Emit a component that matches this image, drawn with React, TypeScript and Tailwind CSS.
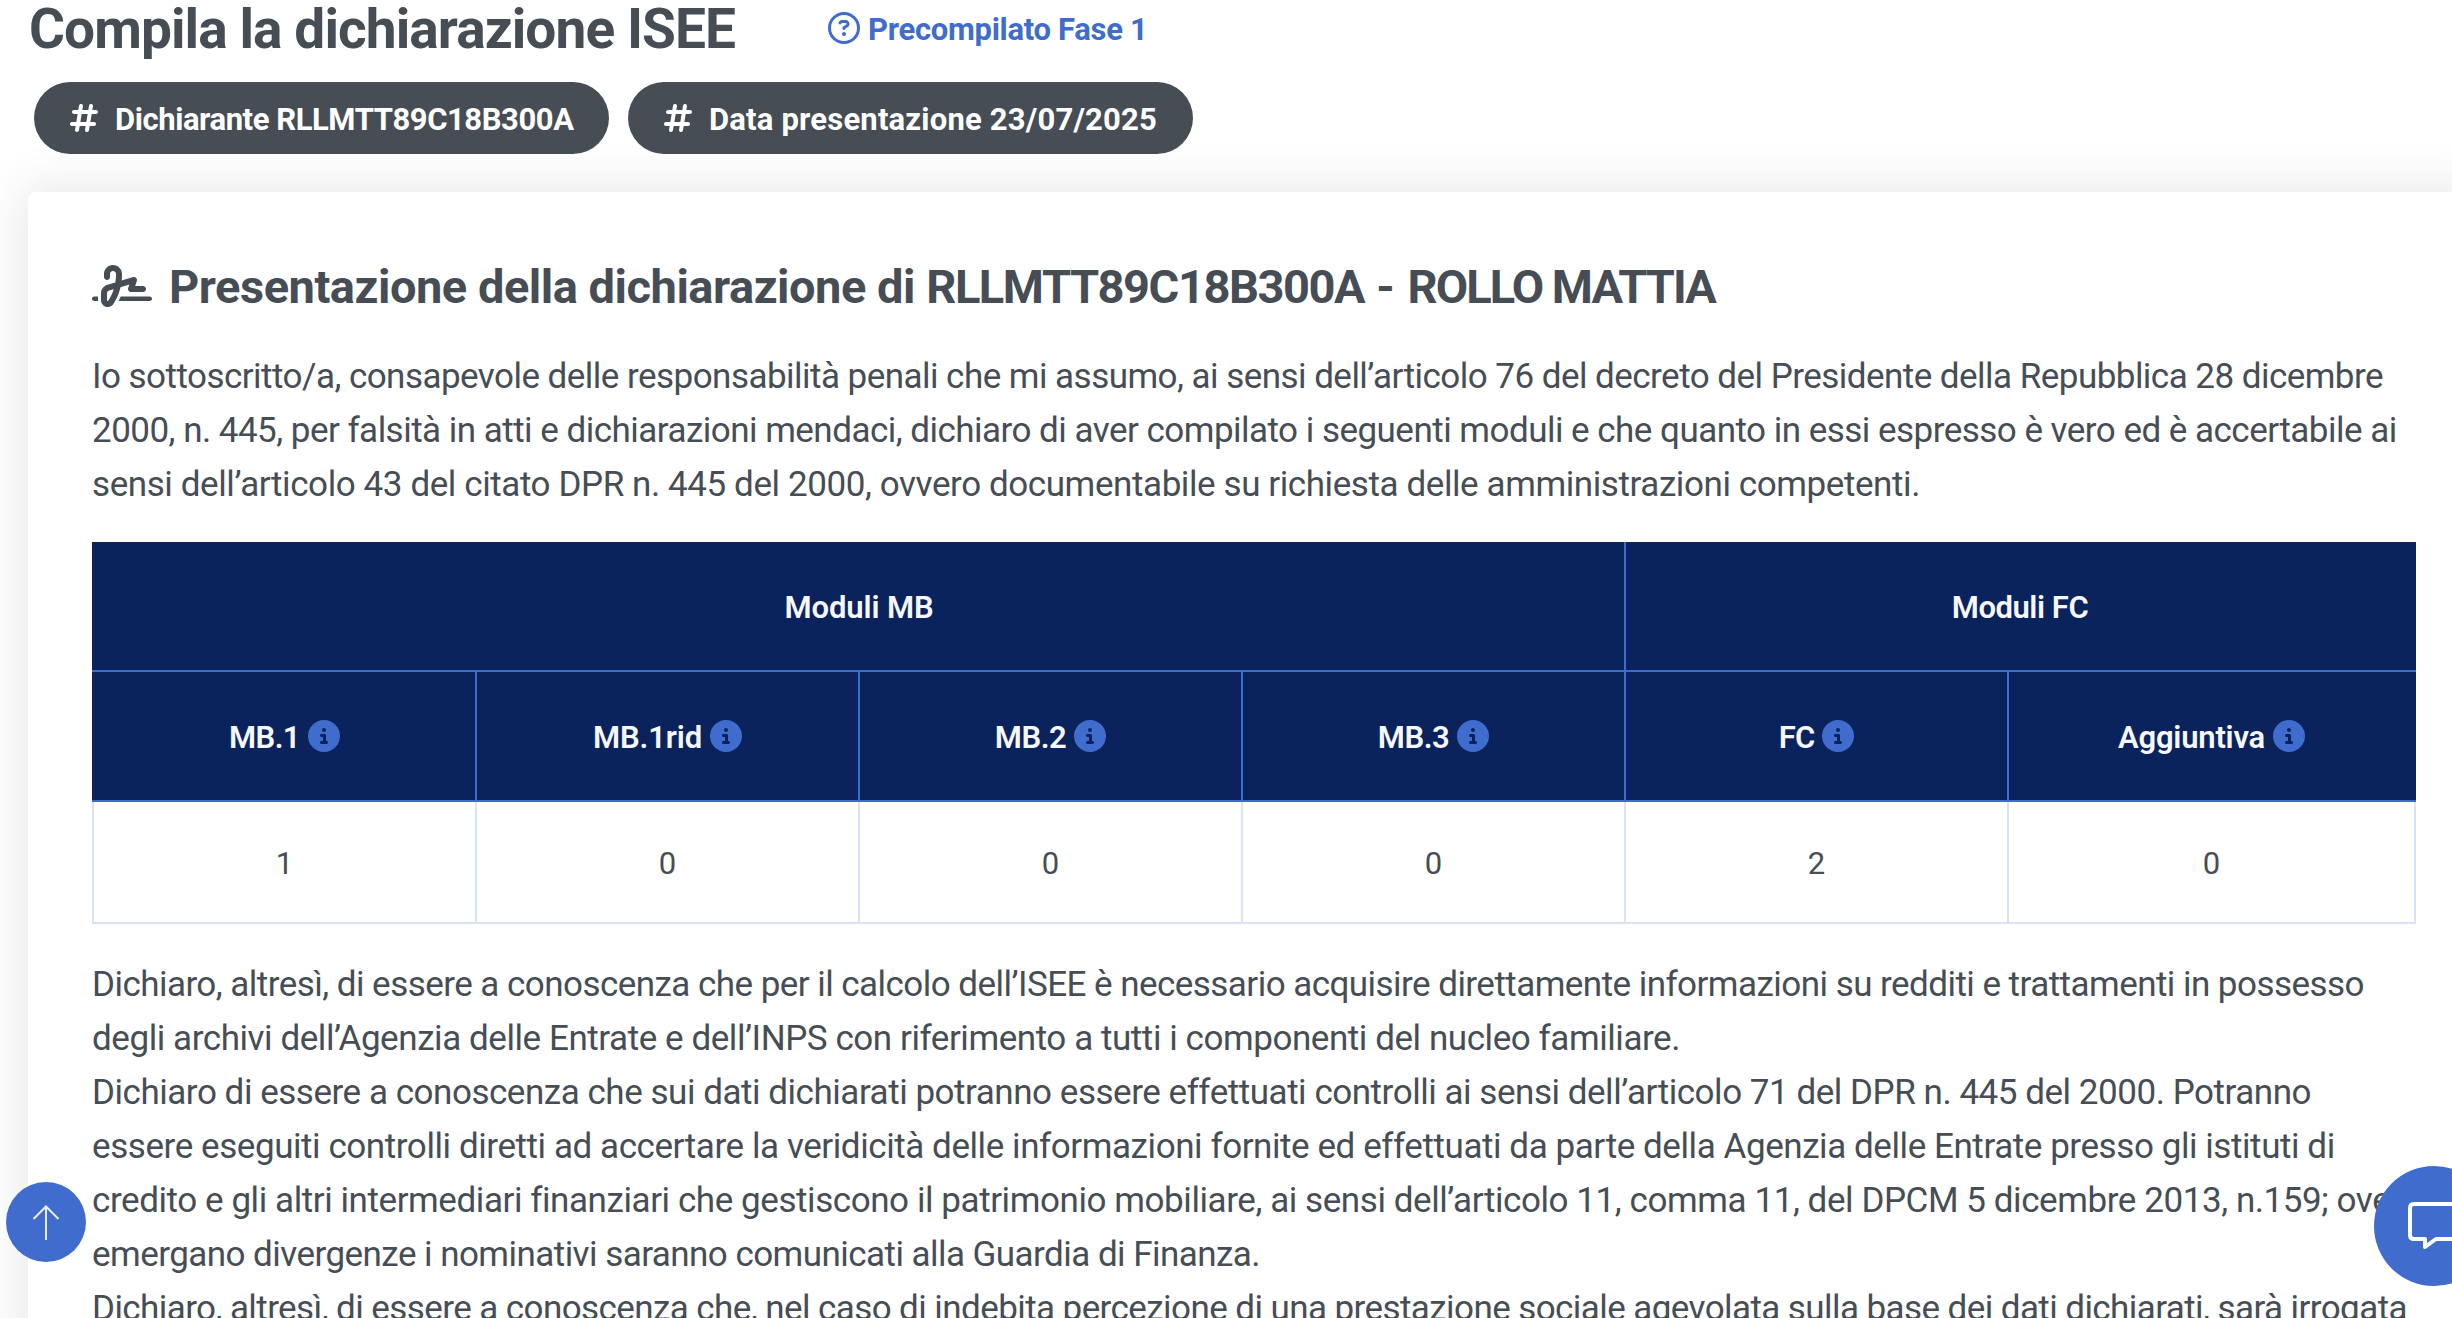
import {
  FaCircleInfo,
  FaHashtag,
  FaRegCircleQuestion,
  FaSignature,
} from "react-icons/fa6";

type Line = { text: string; tracking: string };

const declaration: Line[] = [
  {
    text: "Io sottoscritto/a, consapevole delle responsabilità penali che mi assumo, ai sensi dell’articolo 76 del decreto del Presidente della Repubblica 28 dicembre",
    tracking: "tracking-[-0.533px]",
  },
  {
    text: "2000, n. 445, per falsità in atti e dichiarazioni mendaci, dichiaro di aver compilato i seguenti moduli e che quanto in essi espresso è vero ed è accertabile ai",
    tracking: "tracking-[-0.52px]",
  },
  {
    text: "sensi dell’articolo 43 del citato DPR n. 445 del 2000, ovvero documentabile su richiesta delle amministrazioni competenti.",
    tracking: "tracking-[-0.412px]",
  },
];

const consent: Line[] = [
  {
    text: "Dichiaro, altresì, di essere a conoscenza che per il calcolo dell’ISEE è necessario acquisire direttamente informazioni su redditi e trattamenti in possesso",
    tracking: "tracking-[-0.54px]",
  },
  {
    text: "degli archivi dell’Agenzia delle Entrate e dell’INPS con riferimento a tutti i componenti del nucleo familiare.",
    tracking: "tracking-[-0.435px]",
  },
  {
    text: "Dichiaro di essere a conoscenza che sui dati dichiarati potranno essere effettuati controlli ai sensi dell’articolo 71 del DPR n. 445 del 2000. Potranno",
    tracking: "tracking-[-0.465px]",
  },
  {
    text: "essere eseguiti controlli diretti ad accertare la veridicità delle informazioni fornite ed effettuati da parte della Agenzia delle Entrate presso gli istituti di",
    tracking: "tracking-[-0.43px]",
  },
  {
    text: "credito e gli altri intermediari finanziari che gestiscono il patrimonio mobiliare, ai sensi dell’articolo 11, comma 11, del DPCM 5 dicembre 2013, n.159; ove",
    tracking: "tracking-[-0.427px]",
  },
  {
    text: "emergano divergenze i nominativi saranno comunicati alla Guardia di Finanza.",
    tracking: "tracking-[-0.545px]",
  },
  {
    text: "Dichiaro, altresì, di essere a conoscenza che, nel caso di indebita percezione di una prestazione sociale agevolata sulla base dei dati dichiarati, sarà irrogata",
    tracking: "tracking-[-0.579px]",
  },
];

const modules = [
  { name: "MB.1", count: 1, tracking: "tracking-[-0.6px]" },
  { name: "MB.1rid", count: 0, tracking: "tracking-[-0.14px]" },
  { name: "MB.2", count: 0, tracking: "tracking-[-0.5px]" },
  { name: "MB.3", count: 0, tracking: "tracking-[-0.5px]" },
  { name: "FC", count: 2, tracking: "tracking-[-0.8px]" },
  { name: "Aggiuntiva", count: 0, tracking: "tracking-[-0.2px]" },
];

function Paragraph({ lines }: { lines: Line[] }) {
  return (
    <p className="text-[35px] leading-[54px] whitespace-nowrap">
      {lines.map((line) => (
        <span key={line.text} className={`block ${line.tracking}`}>
          {line.text}
        </span>
      ))}
    </p>
  );
}

function Chip({
  label,
  width,
  tracking,
}: {
  label: string;
  width: string;
  tracking: string;
}) {
  return (
    <div
      className={`flex h-[72px] shrink-0 items-center gap-[17px] rounded-full bg-[#474d55] pl-[36px] text-white ${width}`}
    >
      <FaHashtag className="h-[32px] w-[28px] shrink-0" />
      <span
        className={`pt-[3px] text-[31px] leading-[40px] font-bold whitespace-nowrap ${tracking}`}
      >
        {label}
      </span>
    </div>
  );
}

function ModulesTable() {
  return (
    <div className="grid w-[2324px] grid-cols-[385px_383px_383px_383px_383px_407px] text-[31px] leading-[40px]">
      <div className="col-span-4 flex h-[130px] items-center justify-center border-r-2 border-b-2 border-[#3f6ccd] bg-[#0a235c] font-semibold text-[#f5f7fc]">
        <span className="pt-[3px] pl-[2px] tracking-[-0.1px]">Moduli MB</span>
      </div>
      <div className="col-span-2 flex h-[130px] items-center justify-center border-b-2 border-[#3f6ccd] bg-[#0a235c] font-semibold text-[#f5f7fc]">
        <span className="pt-[3px] pr-[2px] tracking-[-0.45px]">Moduli FC</span>
      </div>
      {modules.map((m) => (
        <div
          key={m.name}
          className="flex h-[130px] items-center justify-center gap-[8px] border-r-2 border-b-2 border-[#3f6ccd] bg-[#0a235c] font-semibold text-[#f5f7fc] nth-[3]:pl-[2px] nth-[8]:border-r-0 nth-[8]:pr-[2px]"
        >
          <span className={`pt-[3px] ${m.tracking}`}>{m.name}</span>
          <FaCircleInfo className="size-[32px] text-[#3f6ccd]" />
        </div>
      ))}
      {modules.map((m) => (
        <div
          key={m.name}
          className="flex h-[122px] items-center justify-center border-r-2 border-b-2 border-[#d9e3f5] nth-[9]:border-l-2"
        >
          <span className="pt-[3px]">{m.count}</span>
        </div>
      ))}
    </div>
  );
}

export default function App() {
  return (
    <div className="relative h-[1318px] w-[2452px] overflow-hidden bg-white font-['Roboto',sans-serif] text-[#474d55]">
      <header className="flex flex-col gap-[24px]">
        <div className="flex h-[58px] items-center pl-[29px]">
          <h1 className="w-[799px] text-[55px] leading-[58px] font-bold tracking-[-0.92px] whitespace-nowrap">
            Compila la dichiarazione ISEE
          </h1>
          <a className="flex items-center gap-[8px] text-[#3f6ccd]">
            <FaRegCircleQuestion className="mb-[2px] size-[32px]" />
            <span className="pt-px text-[31px] leading-[40px] font-bold tracking-[-0.3px] whitespace-nowrap">
              Precompilato Fase 1
            </span>
          </a>
        </div>
        <div className="flex gap-[19px] pl-[34px]">
          <Chip
            label="Dichiarante RLLMTT89C18B300A"
            width="w-[575px]"
            tracking="tracking-[-0.43px]"
          />
          <Chip
            label="Data presentazione 23/07/2025"
            width="w-[565px]"
            tracking="tracking-[0.19px]"
          />
        </div>
      </header>

      <main className="mt-[38px] ml-[28px] h-[1300px] w-[2452px] rounded-lg bg-white px-[64px] pt-[65px] shadow-[0_0_50px_4px_rgba(40,50,60,0.12)]">
        <div className="flex items-center gap-[17px]">
          <FaSignature className="mb-[2px] h-[48px] w-[60px] shrink-0" />
          <h2 className="text-[47px] leading-[60px] font-bold whitespace-nowrap">
            <span className="tracking-[-0.48px]">
              Presentazione della dichiarazione di{" "}
            </span>
            <span className="tracking-[-1.45px]">RLLMTT89C18B300A</span>
            <span className="tracking-[0.5px]"> - </span>
            <span className="tracking-[-1.95px]">ROLLO MATTIA</span>
          </h2>
        </div>
        <div className="mt-[33px] mb-[30px]">
          <Paragraph lines={declaration} />
        </div>
        <ModulesTable />
        <div className="mt-[34px]">
          <Paragraph lines={consent} />
        </div>
      </main>

      <button
        aria-label="Torna su"
        className="absolute top-[1182px] left-[6px] flex size-[80px] items-center justify-center rounded-full bg-[#3f6ccd]"
      >
        <svg
          className="size-[40px] text-[#e8edfa]"
          viewBox="0 0 40 40"
          fill="none"
          stroke="currentColor"
          strokeWidth="2"
        >
          <path d="M20 38V4.5M7.5 17 20 4.5 32.5 17" />
        </svg>
      </button>

      <button
        aria-label="Chat"
        className="absolute top-[1166px] left-[2374px] flex size-[120px] items-center justify-center rounded-full bg-[#3f6ccd]"
      >
        <svg
          className="h-[48px] w-[52px] text-white"
          viewBox="0 0 52 48"
          fill="none"
          stroke="currentColor"
          strokeWidth="4"
        >
          <path
            d="M6 2H46Q50 2 50 6V33Q50 37 46 37H28L17 45V37H6Q2 37 2 33V6Q2 2 6 2Z"
            strokeLinejoin="round"
          />
        </svg>
      </button>
    </div>
  );
}
